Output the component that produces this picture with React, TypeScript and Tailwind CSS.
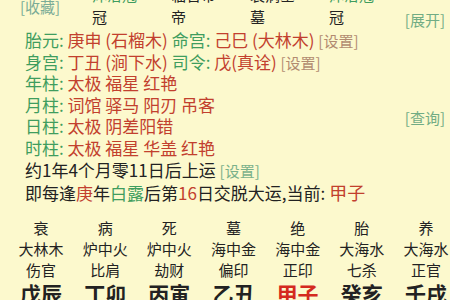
const font = { fontFamily: '"Noto Sans CJK SC", "Noto Sans", sans-serif' }

const green = 'text-[#3f9d5e]'
const red = 'text-[#c2402e]'

function Link({ text, color = 'text-[#a0705a]' }: { text: string; color?: string }) {
  return <span className={`text-[15px] ${color} opacity-80`}>[{text}]</span>
}

function Line({ label, children }: { label: string; children: React.ReactNode }) {
  return (
    <div className="h-[21.5px] leading-[21.5px] whitespace-nowrap">
      <span className={green}>{label}: </span>
      {children}
    </div>
  )
}

const table = [
  ['衰', '病', '死', '墓', '绝', '胎', '养'],
  ['大林木', '炉中火', '炉中火', '海中金', '海中金', '大海水', '大海水'],
  ['伤官', '比肩', '劫财', '偏印', '正印', '七杀', '正官'],
]
const pillars = ['戊辰', '丁卯', '丙寅', '乙丑', '甲子', '癸亥', '壬戌']

export default function App() {
  return (
    <div style={font} className="relative w-[450px] h-[300px] overflow-hidden bg-[#fcf9cd] text-[#222]">
      <div className="absolute left-[20px] top-[-6px]">
        <Link text="收藏" color="text-[#5a9a8a]" />
      </div>
      <div className="absolute right-[5px] top-[7px]">
        <Link text="展开" color="text-[#4f9a72]" />
      </div>
      <div className="absolute right-[5px] top-[105px]">
        <Link text="查询" color="text-[#4f9a72]" />
      </div>

      <div className="ml-[92px] mt-[-13px] flex text-[15px]">
        {[
          ['沐浴冠', green, '冠'],
          ['临官帝', '', '帝'],
          ['衰病墓', '', '墓'],
          ['沐浴冠', green, '冠'],
        ].map(([a, c, b], i) => (
          <div key={i} className="w-[79px]">
            <div className={`${c} leading-[16px]`}>{a}</div>
            <div className="pt-[2px] leading-[24px]">{b}</div>
          </div>
        ))}
      </div>

      <div className="pl-[25px] text-[17px]">
        <Line label="胎元">
          <span className={red}>庚申 (石榴木) </span>
          <span className={green}>命宫: </span>
          <span className={red}>己巳 (大林木) </span>
          <Link text="设置" />
        </Line>
        <Line label="身宫">
          <span className={red}>丁丑 (涧下水) </span>
          <span className={green}>司令: </span>
          <span className={red}>戊(真诠) </span>
          <Link text="设置" />
        </Line>
        <Line label="年柱">
          <span className={red}>太极 福星 红艳</span>
        </Line>
        <Line label="月柱">
          <span className={red}>词馆 驿马 阳刃 吊客</span>
        </Line>
        <Line label="日柱">
          <span className={red}>太极 阴差阳错</span>
        </Line>
        <Line label="时柱">
          <span className={red}>太极 福星 华盖 红艳</span>
        </Line>
        <div className="h-[23px] leading-[23px] whitespace-nowrap">
          约1年4个月零11日后上运 <Link text="设置" color="text-[#5aa07a]" />
        </div>
        <div className="h-[23px] leading-[23px] whitespace-nowrap">
          即每逢<span className={red}>庚</span>年<span className={green}>白露</span>后第
          <span className={red}>16</span>日交脱大运,当前: <span className={`${red} text-[18px]`}>甲子</span>
        </div>
      </div>

      <div className="mt-[13px] ml-[9px] w-[449px] grid grid-cols-7 text-center text-[15px] leading-[21px]">
        {table.map((row) =>
          row.map((cell, i) => <div key={row[0] + i}>{cell}</div>)
        )}
        {pillars.map((p) => (
          <div
            key={p}
            className={`text-[21px] font-bold leading-[26px] ${p === '甲子' ? 'text-[#d42a1e]' : ''}`}
          >
            {p}
          </div>
        ))}
      </div>
    </div>
  )
}
